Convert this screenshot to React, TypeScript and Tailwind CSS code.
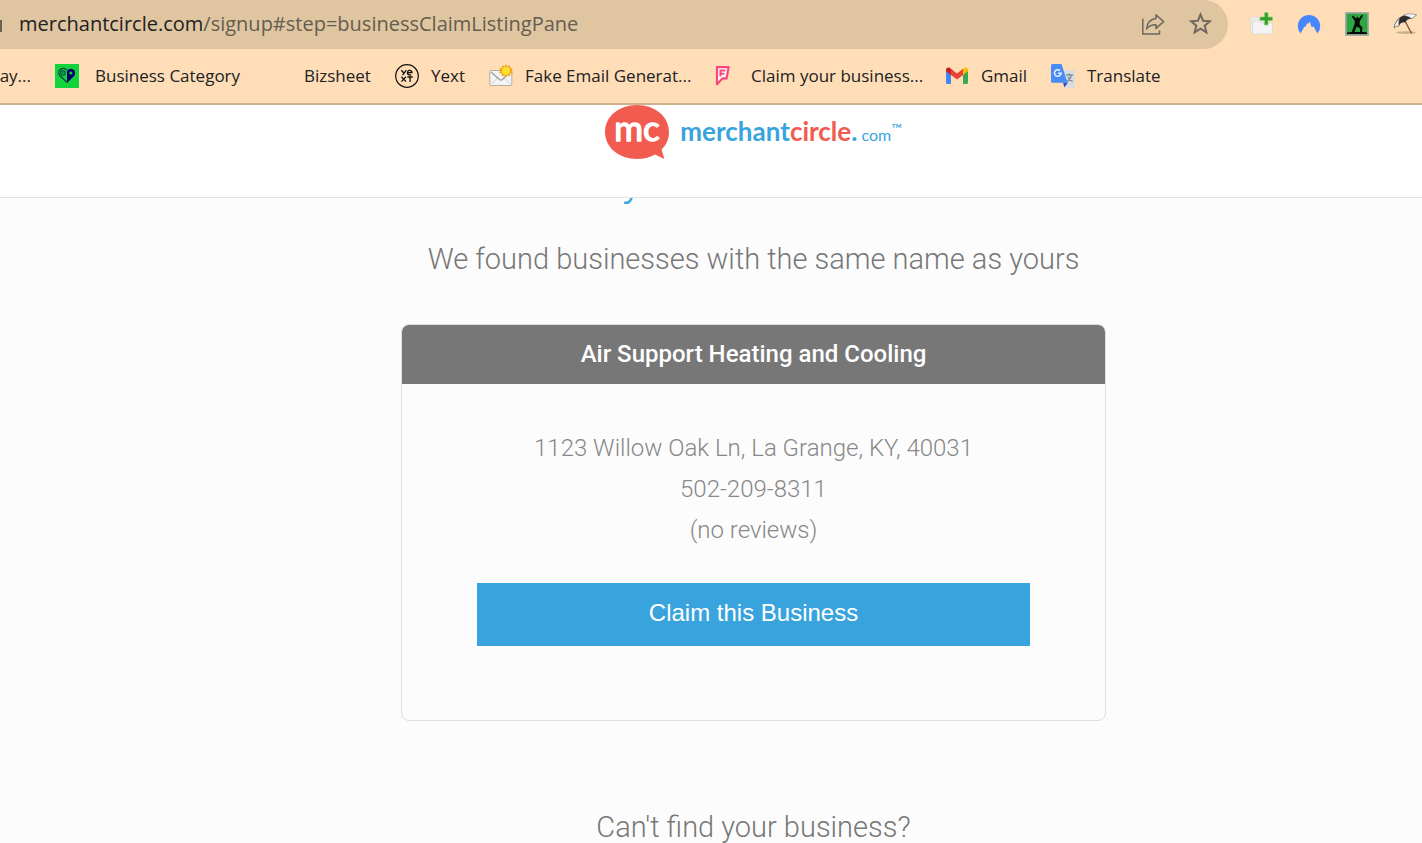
import React from 'react';
import { clsx } from 'clsx';

function CategoryIcon() {
    return (
        <svg viewBox="0 0 24 24" className="w-6 h-6 shrink-0" aria-hidden="true">
            <rect width="24" height="24" fill="#12d33c" />
            <path d="M12 18.4 L5 11.8 A4.3 4.3 0 0 1 11.6 6" fill="none" stroke="#0a3a4a" strokeWidth="1.3" />
            <circle cx="8" cy="9" r="2.2" fill="none" stroke="#0a3a4a" strokeWidth="1.1" />
            <circle cx="8" cy="9" r="0.7" fill="#0a3a4a" />
            <path d="M12 19 V7 C13.5 4.2 17.5 4 19.4 6.6 C20.8 8.8 20 11.2 18.6 12.6 Z" fill="#06006e" />
            <circle cx="15.8" cy="9" r="1.6" fill="#12d33c" />
        </svg>
    );
}

function YextIcon() {
    return (
        <svg viewBox="0 0 24 24" className="w-6 h-6 shrink-0" aria-hidden="true">
            <circle cx="12" cy="12" r="11.3" fill="none" stroke="#111" strokeWidth="1.2" />
            <g fill="none" stroke="#111" strokeWidth="1.3">
                <path d="M6.3 6.2 L8.8 9 M11.3 6.2 L7.6 11.2" />
                <path d="M12.6 8.6 H17 A2.3 2.3 0 1 0 16 10.6" />
                <path d="M6.4 12.8 L11 17.6 M11 12.8 L6.4 17.6" />
                <path d="M12.4 13 H17.8 M15.1 13 V18" />
            </g>
        </svg>
    );
}

function MailSunIcon() {
    return (
        <svg viewBox="0 0 24 24" className="w-6 h-6 shrink-0" aria-hidden="true">
            <rect x="0.8" y="6.5" width="22" height="15" rx="1" fill="#f4f4f4" stroke="#b9ac9b" />
            <path d="M2 20.5 L9 13.5 M22 20.5 L15 13.5" stroke="#d0d0d0" fill="none" />
            <path d="M2 8 L10.5 15.5 Q12 16.6 13.5 15.5 L21 8" stroke="#9a9a9a" fill="none" strokeWidth="1.2" />
            <path d="M17 0 L18.4 2.4 L21 1.2 L21.2 4 L24 4.4 L22.6 6.8 L24 9 L21.3 9.6 L21 12.4 L18.5 11.3 L17 13.4 L15.4 11.3 L12.9 12.4 L12.6 9.6 L10 9 L11.4 6.8 L10 4.4 L12.8 4 L13 1.2 L15.6 2.4 Z" fill="#f2a81d" />
            <circle cx="17" cy="6.8" r="4" fill="#ffe02e" />
        </svg>
    );
}

function FoursquareIcon() {
    return (
        <svg viewBox="0 0 24 24" className="w-6 h-6 shrink-0" aria-hidden="true">
            <path d="M6 3.2 H17.6 L15.6 14.4 H11.4 L6 20.2 Z" fill="#fff" stroke="#fa4779" strokeWidth="2.2" strokeLinejoin="round" />
            <path d="M9.4 12.4 V6.4 H14.4 M9.4 9.8 H13.4" fill="none" stroke="#fa4779" strokeWidth="2" />
        </svg>
    );
}

function GmailIcon() {
    return (
        <svg viewBox="0 0 24 24" className="w-6 h-6 shrink-0" aria-hidden="true">
            <path d="M1 6 L6 9.8 V20 H2.5 Q1 20 1 18.5 Z" fill="#4285f4" />
            <path d="M18 9.8 L23 6 V18.5 Q23 20 21.5 20 H18 Z" fill="#34a853" />
            <path d="M6 4.8 L12 9.4 L18 4.8 V11 L12 15.6 L6 11 Z" fill="#ea4335" />
            <path d="M1 6 C1 3.6 3.6 3 5 4 L6 4.8 V11 L1 7.2 Z" fill="#c5221f" />
            <path d="M23 6 C23 3.6 20.4 3 19 4 L18 4.8 V11 L23 7.2 Z" fill="#fbbc04" />
        </svg>
    );
}

function TranslateIcon() {
    return (
        <svg viewBox="0 0 24 24" className="w-6 h-6 shrink-0" aria-hidden="true">
            <path d="M9 6 H23 Q24 6 24 7 V24 H15 Z" fill="#dcdcdc" />
            <path d="M12 18.5 H17 L13.5 23.5 Z" fill="#2b4fc0" />
            <path d="M1.5 0 H10.5 L16.5 18.8 H1.5 Q0 18.8 0 17.3 V1.5 Q0 0 1.5 0 Z" fill="#4a8bf5" />
            <path d="M10 8.4 A3.3 3.3 0 1 1 9 6.6 M7 9.2 H10.3" fill="none" stroke="#e8f0ff" strokeWidth="1.5" />
            <path d="M15 11 H22 M18.4 9.4 V11 M20.6 11 Q19.6 15.2 16 17.6 M17 12.8 Q18.6 16 21.6 17.6" fill="none" stroke="#7891a0" strokeWidth="1.4" />
        </svg>
    );
}

const bookmarks = [
    { name: 'Business Category', icon: CategoryIcon, wide: true, width: 'w-[145px]' },
    { name: 'Bizsheet', icon: null, wide: true, width: 'w-[67px]' },
    { name: 'Yext', icon: YextIcon, wide: false, width: 'w-[34px]' },
    { name: 'Fake Email Generat...', icon: MailSunIcon, wide: false, width: 'w-[162px]' },
    { name: 'Claim your business...', icon: FoursquareIcon, wide: true, width: 'w-[170px]' },
    { name: 'Gmail', icon: GmailIcon, wide: false, width: 'w-[46px]' },
    { name: 'Translate', icon: TranslateIcon, wide: false, width: 'w-[74px]' },
];

function AddressBar() {
    return (
        <div className="flex items-center h-[49px]">
            <div className="flex items-center flex-1 h-full bg-[#dfc5a0] rounded-r-full pr-4 pb-[2px]">
                <span className="w-[2px] h-3 mr-[17px] mt-1 bg-[#6b6256]" />
                <p className="flex-1 text-[20px] leading-6 text-[#655d50] whitespace-nowrap">
                    <span className="text-[#202124]">merchantcircle.com</span>/signup#step=businessClaimListingPane
                </p>
                <button aria-label="Share this page" className="mr-6">
                    <svg viewBox="0 0 24 24" className="w-6 h-6" fill="none" stroke="#6e685f" strokeWidth="1.5">
                        <path d="M1.8 6.5 V22 H18.5 V18.5" />
                        <path d="M15 2.8 L22.6 9.6 L15 16.4 V12.8 C10.5 12.6 7.6 14 5.6 17 C6 11.4 9 7 15 6.4 Z" strokeLinejoin="round" />
                    </svg>
                </button>
                <button aria-label="Bookmark this page">
                    <svg viewBox="0 0 24 24" className="w-[23px] h-[23px]" fill="none" stroke="#6e685f" strokeWidth="2.1">
                        <path d="M12 2.6 L14.7 9.2 L21.8 9.7 L16.4 14.3 L18.1 21.2 L12 17.4 L5.9 21.2 L7.6 14.3 L2.2 9.7 L9.3 9.2 Z" />
                    </svg>
                </button>
            </div>

            <div className="flex items-center gap-6 pl-[21px] pb-[2px] w-[194px] overflow-hidden">
                <button aria-label="Add files" className="shrink-0">
                    <svg viewBox="0 0 24 24" className="w-6 h-6">
                        <path d="M1.5 5 H9 L10 7 H15 V20 H1.5 Z" fill="#ececec" stroke="#dcd6cc" strokeWidth="0.6" />
                        <path d="M3.5 9 H11 L12.5 11 H23.5 V22 H3.5 Z" fill="#f3f3f3" stroke="#d6d0c6" strokeWidth="0.6" />
                        <path d="M15.5 0.5 H19 V5 H23.5 V8.5 H19 V13 H15.5 V8.5 H11 V5 H15.5 Z" fill="#2fa02a" stroke="#8fd07c" strokeWidth="0.8" />
                    </svg>
                </button>
                <button aria-label="VPN" className="shrink-0">
                    <svg viewBox="0 0 24 24" className="w-6 h-6">
                        <path d="M3.6 21.6 A11.2 11.2 0 1 1 20.4 21.6 L16.4 14.2 L14.8 15.6 L12.6 9.4 L11.2 12 L10.4 11 L8.2 15 L7.4 14.4 Z" fill="#4687ff" />
                    </svg>
                </button>
                <button aria-label="Green figure" className="shrink-0">
                    <svg viewBox="0 0 24 24" className="w-6 h-6">
                        <rect x="0.8" y="0.8" width="22.4" height="22.4" fill="#2fa544" stroke="#a9aba9" strokeWidth="1.6" />
                        <path d="M2 22 V20.6 L6.6 20 L9.2 13.6 L10 9.4 L6.8 4.4 L8 3.4 L11 6.6 L12.4 4.6 L14 6.6 L16.8 2.8 L18 3.6 L14.8 9.2 L14.6 12.6 L17.4 15.4 L17 19.8 L22 20.4 V22 Z M11.6 14.4 L9.4 20 H15 L15.2 16.6 Z" fill="#050b05" fillRule="evenodd" />
                    </svg>
                </button>
                <button aria-label="Umbrella" className="shrink-0">
                    <svg viewBox="0 0 24 24" className="w-6 h-6">
                        <ellipse cx="13" cy="20.6" rx="10" ry="1.4" fill="#c9b08c" />
                        <path d="M12 9 L18.6 21.5" stroke="#7b5a3a" strokeWidth="1.4" />
                        <path d="M1 16 C2 8 9 0 23.5 3 C22 4 20 6 19 7 C16 6.4 13.5 8 12.4 10.4 C9 10 6.6 11.6 6 14 C4 14 2.4 14.8 1 16 Z" fill="#2d2d2d" />
                        <path d="M10 3.6 C14 1 20 1.8 23.5 3 C22 4 20 6 19 7 C16.5 4.8 13 3.8 10 3.6 Z" fill="#f6f6f6" stroke="#555" strokeWidth="0.5" />
                        <path d="M1 16 C1.6 11.6 4 8 6.6 6.2 C5.8 8.6 5.6 11.6 6 14 C4 14 2.4 14.8 1 16 Z" fill="#f0f0f0" stroke="#555" strokeWidth="0.5" />
                    </svg>
                </button>
            </div>
        </div>
    );
}

function BookmarksBar() {
    return (
        <nav aria-label="Bookmarks" className="flex items-center gap-6 h-[54px] text-[17px] leading-6 text-[#202124] whitespace-nowrap overflow-hidden">
            <a href="#more" className="flex justify-end w-[31px]">ay...</a>
            {bookmarks.map((item) => (
                <a key={item.name} href="#bookmark" className={clsx('flex items-center shrink-0', item.wide ? 'gap-4' : 'gap-3')}>
                    {item.icon ? <item.icon /> : <span className="w-6 h-6" />}
                    <span className={item.width}>{item.name}</span>
                </a>
            ))}
        </nav>
    );
}

function Logo() {
    return (
        <a href="#home" aria-label="merchantcircle.com" className="flex items-start">
            <svg viewBox="0 0 64 55" className="w-16 h-[55px]">
                <path d="M32 0 C50 0 64 11.5 64 27 C64 34 61.6 39.6 56.6 44.4 L59.4 54 L50 49.6 C44.6 52.8 38.6 54 32 54 C14 54 0 42.4 0 27 C0 11.5 14 0 32 0 Z" fill="#f25c50" />
                <text x="32" y="36" textAnchor="middle" fontSize="35" fill="#fff" stroke="#fff" strokeWidth="1.4" strokeLinejoin="round" fontFamily="Lato, sans-serif" fontWeight="400">mc</text>
            </svg>
            <span className="flex items-baseline pt-3 pl-[11px] text-[26px] leading-7 font-bold font-['Lato',sans-serif] text-[#39a3dd]">
                merchant<span className="text-[#f25c50]">circle</span>.
                <span className="pl-1 text-[16px] font-normal">com</span>
                <sup className="text-[14px] font-normal">™</sup>
            </span>
        </a>
    );
}

export default function App() {
    return (
        <div className="min-h-screen overflow-hidden bg-[#fcfcfc] font-['Roboto',sans-serif] text-[#777]">
            <div className="bg-[#ffdeb7] border-b-2 border-[#cdb28f] font-['Open_Sans',sans-serif]">
                <AddressBar />
                <BookmarksBar />
            </div>

            <header className="flex justify-center h-[93px] pl-[85px] bg-white border-b border-[#e2e2e2]">
                <Logo />
            </header>

            <main className="pl-[85px]">
                <div className="w-[705px] mx-auto text-center font-light">
                    {/* heading is scrolled up behind the site header */}
                    <h1 className="flex items-end h-[6px] pl-[221px] overflow-hidden text-[44px] leading-12 text-[#39a3dd]">y</h1>
                    <h2 className="mt-[35px] text-[29px] leading-10">We found businesses with the same name as yours</h2>

                    <section className="mt-[45px] border border-[#dedede] rounded-lg overflow-hidden">
                        <h3 className="h-[59px] text-[24px] leading-[58px] font-medium text-white bg-[#777]">
                            Air Support Heating and Cooling
                        </h3>
                        <div className="px-[75px] pt-11 pb-[74px] text-[24px] leading-[41px] text-[#888]">
                            <p>1123 Willow Oak Ln, La Grange, KY, 40031</p>
                            <p>502-209-8311</p>
                            <p>(no reviews)</p>
                            <button className="w-full h-[63px] mt-8 pb-1 text-[24px] leading-7 font-normal font-['Liberation_Sans',sans-serif] text-white bg-[#39a3dd]">
                                Claim this Business
                            </button>
                        </div>
                    </section>

                    <h2 className="mt-[86px] text-[29px] leading-10">Can't find your business?</h2>
                </div>
            </main>
        </div>
    );
}
